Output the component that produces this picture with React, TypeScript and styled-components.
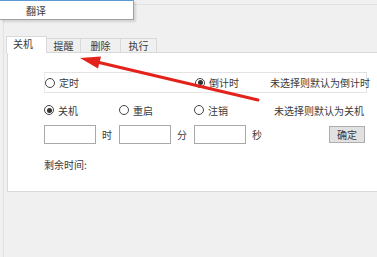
import * as React from "react";
import styled, { createGlobalStyle } from "styled-components";

const GlobalStyle = createGlobalStyle`
  html, body {
    margin: 0;
    padding: 0;
    background: #f0f0f0;
  }
  body {
    font-family: "Noto Sans CJK SC", "Noto Sans", sans-serif;
    font-size: 10px;
    color: #3a3a3a;
  }
`;

const tabs = [
  { label: "关机", width: 41 },
  { label: "提醒", width: 35 },
  { label: "删除", width: 41 },
  { label: "执行", width: 37 },
];

const Radio: React.FC<{ checked?: boolean; label: string }> = ({
  checked,
  label,
}) => (
  <RadioWrap>
    <Circle>{checked && <Dot />}</Circle>
    <span>{label}</span>
  </RadioWrap>
);

const Arrow = () => (
  <ArrowLayer width="377" height="257" viewBox="0 0 377 257">
    <line
      x1="258"
      y1="100"
      x2="97"
      y2="62"
      stroke="#e3231b"
      strokeWidth="3"
      strokeLinecap="round"
    />
    <polygon points="80,58 101,56.5 98,68.5" fill="#e3231b" />
  </ArrowLayer>
);

const App: React.FC = () => {
  return (
    <Screen>
      <GlobalStyle />
      <Frame>
        <TopStrip>
          <Rule />
        </TopStrip>
        <TabBar>
          {tabs.map((t, i) => (
            <Tab key={t.label} $active={i === 0} $w={t.width}>
              {t.label}
            </Tab>
          ))}
        </TabBar>
        <Panel>
          <GroupBox>
            <Cell>
              <Radio label="定时" />
            </Cell>
            <Cell />
            <Cell>
              <Radio checked label="倒计时" />
            </Cell>
            <Note>未选择则默认为倒计时</Note>
          </GroupBox>

          <Row>
            <Cell>
              <Radio checked label="关机" />
            </Cell>
            <Cell>
              <Radio label="重启" />
            </Cell>
            <Cell>
              <Radio label="注销" />
            </Cell>
            <Note $right={3}>未选择则默认为关机</Note>
          </Row>

          <InputRow>
            <Cell>
              <TimeBox />
              <Unit>时</Unit>
            </Cell>
            <Cell>
              <TimeBox />
              <Unit>分</Unit>
            </Cell>
            <Cell>
              <TimeBox />
              <Unit>秒</Unit>
            </Cell>
            <OkButton>确定</OkButton>
          </InputRow>

          <Remain>剩余时间:</Remain>
        </Panel>
      </Frame>

      <Menu>
        <MenuEdge />
        <MenuItem>翻译</MenuItem>
      </Menu>
      <Arrow />
    </Screen>
  );
};

const Screen = styled.div`
  position: relative;
  width: 377px;
  height: 257px;
  overflow: hidden;
  background: #f0f0f0;
`;

const Frame = styled.div`
  margin-left: 3px;
  height: 257px;
  border-left: 1px solid #dbe2ea;
  padding-left: 3px;
`;

const TopStrip = styled.div`
  height: 36px;
  padding-top: 4px;
  box-sizing: border-box;
`;

const Rule = styled.div`
  height: 1px;
  background: #e2e2e2;
`;

const TabBar = styled.div`
  display: flex;
  align-items: flex-end;
  height: 16px;
  margin-left: -1px;
  position: relative;
  z-index: 1;
`;

const Tab = styled.div<{ $active?: boolean; $w: number }>`
  width: ${(p) => p.$w}px;
  height: ${(p) => (p.$active ? 17 : 14)}px;
  margin-bottom: ${(p) => (p.$active ? -1 : 0)}px;
  margin-left: -1px;
  box-sizing: border-box;
  border: 1px solid #d9d9d9;
  border-bottom: none;
  background: ${(p) => (p.$active ? "#ffffff" : "#f0f0f0")};
  display: flex;
  align-items: center;
  justify-content: ${(p) => (p.$active ? "flex-start" : "center")};
  padding-left: ${(p) => (p.$active ? 6 : 0)}px;
  font-size: 10px;
  line-height: 1;
  padding-bottom: ${(p) => (p.$active ? 2 : 0)}px;
  &:first-child {
    margin-left: 0;
  }
`;

const Panel = styled.div`
  height: 140px;
  box-sizing: border-box;
  background: #ffffff;
  border: 1px solid #d9d9d9;
  border-right: none;
  padding: 19px 0 0 36px;
`;

const GroupBox = styled.div`
  width: 323px;
  height: 21px;
  box-sizing: border-box;
  border: 1px solid #e3e3e3;
  border-left-color: #ececec;
  display: flex;
  align-items: center;
`;

const Row = styled.div`
  width: 323px;
  height: 20px;
  margin-top: 7px;
  display: flex;
  align-items: center;
`;

const InputRow = styled(Row)`
  height: 19px;
  margin-top: 5px;
`;

const Cell = styled.div`
  width: 75px;
  flex: none;
  display: flex;
  align-items: center;
`;

const Note = styled.div<{ $right?: number }>`
  flex: 1;
  text-align: right;
  padding-right: ${(p) => p.$right ?? 3}px;
  white-space: nowrap;
`;

const RadioWrap = styled.label`
  display: flex;
  align-items: center;
  gap: 4px;
  white-space: nowrap;
`;

const Circle = styled.span`
  width: 10px;
  height: 10px;
  box-sizing: border-box;
  border: 1px solid #444;
  border-radius: 50%;
  background: #fff;
  display: flex;
  align-items: center;
  justify-content: center;
`;

const Dot = styled.span`
  width: 5px;
  height: 5px;
  border-radius: 50%;
  background: #333;
`;

const TimeBox = styled.div`
  width: 52px;
  height: 19px;
  box-sizing: border-box;
  border: 1px solid #a9a9a9;
  background: #fff;
`;

const Unit = styled.span`
  margin-left: 6px;
`;

const OkButton = styled.div`
  margin-left: auto;
  margin-right: 2px;
  width: 36px;
  height: 17px;
  box-sizing: border-box;
  border: 1px solid #adadad;
  background: #e1e1e1;
  display: flex;
  align-items: center;
  justify-content: center;
`;

const Remain = styled.div`
  margin-top: 13px;
`;

const Menu = styled.div`
  position: absolute;
  left: 0;
  top: 0;
  width: 134px;
  height: 20px;
  background: #fff;
  border-right: 1px solid #a0a0a0;
  border-bottom: 1px solid #a0a0a0;
  box-shadow: 2px 2px 2px rgba(0, 0, 0, 0.12);
  box-sizing: border-box;
  z-index: 3;
`;

const MenuEdge = styled.div`
  height: 1px;
  background: #5b9bd5;
`;

const MenuItem = styled.div`
  padding-left: 26px;
  height: 18px;
  display: flex;
  align-items: center;
`;

const ArrowLayer = styled.svg`
  position: absolute;
  left: 0;
  top: 0;
  pointer-events: none;
  z-index: 4;
`;

export default App;
